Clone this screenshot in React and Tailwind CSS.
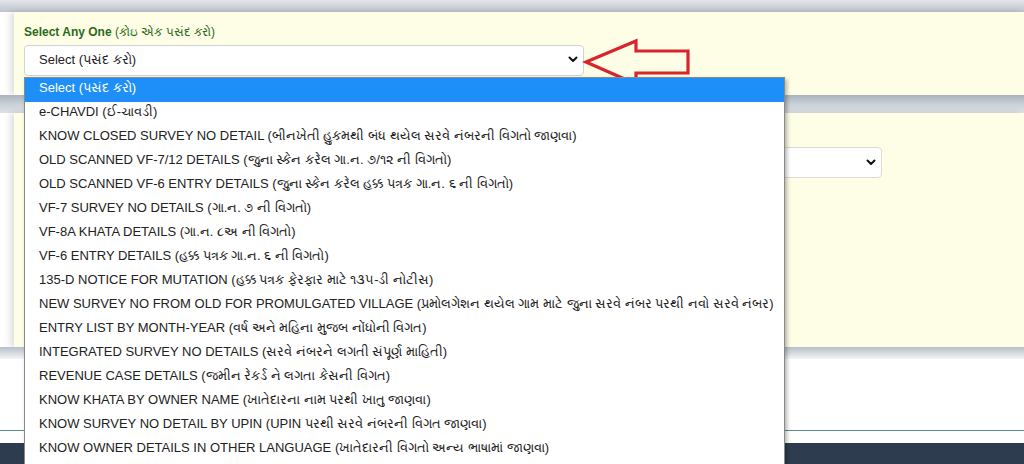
import React from "react";

const options = [
  "Select (પસંદ કરો)",
  "e-CHAVDI (ઈ-ચાવડી)",
  "KNOW CLOSED SURVEY NO DETAIL (બીનખેતી હુકમથી બંધ થયેલ સરવે નંબરની વિગતો જાણવા)",
  "OLD SCANNED VF-7/12 DETAILS (જુના સ્કેન કરેલ ગા.ન. ૭/૧૨ ની વિગતો)",
  "OLD SCANNED VF-6 ENTRY DETAILS (જુના સ્કેન કરેલ હક્ક પત્રક ગા.ન. ૬ ની વિગતો)",
  "VF-7 SURVEY NO DETAILS (ગા.ન. ૭ ની વિગતો)",
  "VF-8A KHATA DETAILS (ગા.ન. ૮અ ની વિગતો)",
  "VF-6 ENTRY DETAILS (હક્ક પત્રક ગા.ન. ૬ ની વિગતો)",
  "135-D NOTICE FOR MUTATION (હક્ક પત્રક ફેરફાર માટે ૧૩૫-ડી નોટીસ)",
  "NEW SURVEY NO FROM OLD FOR PROMULGATED VILLAGE (પ્રમોલગેશન થયેલ ગામ માટે જુના સરવે નંબર પરથી નવો સરવે નંબર)",
  "ENTRY LIST BY MONTH-YEAR (વર્ષ અને મહિના મુજબ નોંધોની વિગત)",
  "INTEGRATED SURVEY NO DETAILS (સરવે નંબરને લગતી સંપૂર્ણ માહિતી)",
  "REVENUE CASE DETAILS (જમીન રેકર્ડ ને લગતા કેસની વિગત)",
  "KNOW KHATA BY OWNER NAME (ખાતેદારના નામ પરથી ખાતુ જાણવા)",
  "KNOW SURVEY NO DETAIL BY UPIN (UPIN પરથી સરવે નંબરની વિગત જાણવા)",
  "KNOW OWNER DETAILS IN OTHER LANGUAGE (ખાતેદારની વિગતો અન્ય ભાષામાં જાણવા)",
  "KNOW PROPERTY CARD DETAILS (પ્રોપર્ટી કાર્ડની વિગતો જાણવા)",
];

function Chevron() {
  return (
    <svg width="10" height="7" viewBox="0 0 10 7" className="shrink-0">
      <polyline points="1.5,1.5 5,5 8.5,1.5" fill="none" stroke="#111" strokeWidth="2" strokeLinecap="round" strokeLinejoin="round" />
    </svg>
  );
}

export default function App() {
  return (
    <div
      className="relative h-[464px] w-[1024px] overflow-hidden bg-white text-[#222]"
      style={{ fontFamily: '"Liberation Sans", Arial, "Noto Sans", sans-serif' }}
    >
      {/* top band */}
      <div className="h-[12px] bg-gradient-to-b from-[#e2e5e9] to-[#bfc5cd]" />

      {/* card 1 */}
      <div className="ml-[14px] flex h-[83px] flex-col bg-[#fefee7] pl-[10px] pt-[13px] shadow-[-4px_0_6px_rgba(0,0,0,0.12)]">
        <div className="text-[12px] leading-[14px] text-[#2b6b1a]">
          <span className="font-bold">Select Any One</span> (કોઇ એક પસંદ કરો)
        </div>
        <div className="mt-[6px] flex h-[31px] w-[560px] items-center justify-between rounded-[4px] border border-[#cfd4da] bg-white pb-[2px] pl-[14px] pr-[5px] text-[13px]">
          <span>Select (પસંદ કરો)</span>
          <Chevron />
        </div>
      </div>

      {/* gap band */}
      <div className="h-[18px] bg-gradient-to-b from-[#aab3be] via-[#c9d0d8] to-[#dde2e7]" />

      {/* card 2 */}
      <div className="ml-[14px] h-[234px] bg-[#fefee7] pl-[10px] pt-[34px] shadow-[-4px_0_6px_rgba(0,0,0,0.12)]">
        <div className="flex h-[31px] w-[858px] items-center justify-end rounded-[4px] border border-[#dcdcd4] bg-white pr-[5px]">
          <Chevron />
        </div>
      </div>

      {/* bottom band */}
      <div className="h-[12px] bg-gradient-to-b from-[#b7bfc9] to-[#f4f6f8]" />
      <div className="h-[71px] bg-white" />
      <div className="h-px bg-[#5e8e8c]" />
      <div className="h-[12px] bg-white" />
      <div className="h-[21px] bg-[#2d3d4f]" />

      {/* red arrow */}
      <svg className="absolute left-[580px] top-[35px]" width="115" height="55" viewBox="580 35 115 55">
        <polygon
          points="586,62 636,41 636,51 688,51 688,73 636,73 636,84"
          fill="none"
          stroke="#d9242c"
          strokeWidth="3.2"
          strokeLinejoin="miter"
        />
      </svg>

      {/* open dropdown list */}
      <div className="absolute left-[24px] top-[77px] w-[761px] border border-[#8a8a8a] bg-white text-[13px] shadow-[2px_2px_4px_rgba(0,0,0,0.3)]">
        {options.map((o, i) => (
          <div
            key={i}
            className={
              i === 0
                ? "flex h-[24px] items-center whitespace-nowrap bg-[#1e8ff8] pb-[4px] pl-[14px] text-white"
                : "flex h-[24px] items-center whitespace-nowrap pb-[4px] pl-[14px] text-[#222]"
            }
          >
            {o}
          </div>
        ))}
      </div>
    </div>
  );
}
